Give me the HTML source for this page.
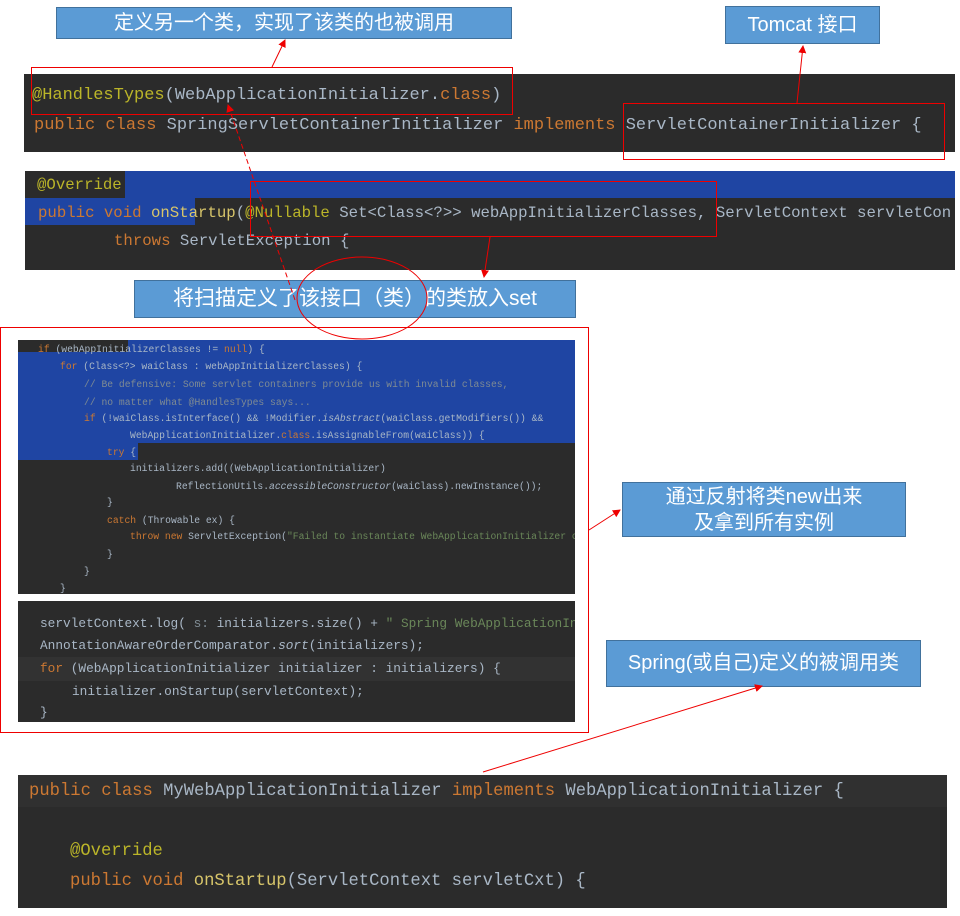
<!DOCTYPE html>
<html><head><meta charset="utf-8"><style>
body{margin:0;width:960px;height:916px;background:#fff;position:relative;overflow:hidden;font-family:"Liberation Sans","Noto Sans CJK SC",sans-serif}
.a{position:absolute}
.code{position:absolute;background:#2b2b2b;overflow:hidden;font-family:"Liberation Mono",monospace;color:#a9b7c6;white-space:pre}
.l{position:absolute;white-space:pre}
.k{color:#cc7832}.an{color:#bbb529}.c{color:#7f8b93}.s{color:#6a8759}.fn{color:#d7c56a}
.lab{position:absolute;background:#5b9bd5;border:1px solid #41719c;color:#fff;text-align:center;box-sizing:border-box}
.rr{position:absolute;border:1px solid #e00;box-sizing:border-box}
</style></head><body>

<div class="lab" style="left:56px;top:7px;width:456px;height:32px;font-size:20px;line-height:30px">定义另一个类，实现了该类的也被调用</div>
<div class="lab" style="left:725px;top:6px;width:155px;height:38px;font-size:20px;line-height:36px">Tomcat 接口</div>

<div class="code" style="left:24px;top:74px;width:931px;height:78px;font-size:17px">
<div class="l" style="left:8px;top:12px"><span class="an">@HandlesTypes</span>(WebApplicationInitializer.<span class="k">class</span>)</div>
<div class="l" style="left:10px;top:42px"><span class="k">public class </span>SpringServletContainerInitializer <span class="k">implements </span>ServletContainerInitializer {</div>
</div>

<div class="code" style="left:25px;top:171px;width:930px;height:99px;font-size:15.7px">
<div class="a" style="left:100px;top:0;width:830px;height:27px;background:#1f45a3"></div>
<div class="a" style="left:0;top:27px;width:170px;height:27px;background:#1f45a3"></div>
<div class="a" style="left:0;top:0;width:100px;height:27px;background:#2b2b2b"></div>
<div class="l" style="left:12px;top:5px"><span class="an">@Override</span></div>
<div class="l" style="left:13px;top:33px"><span class="k">public void </span><span class="fn">onStartup</span>(<span class="an">@Nullable</span> Set&lt;Class&lt;?&gt;&gt; webAppInitializerClasses, ServletContext servletCon</div>
<div class="l" style="left:89px;top:61px"><span class="k">throws </span>ServletException {</div>
</div>

<div class="rr" style="left:31px;top:67px;width:482px;height:48px"></div>
<div class="rr" style="left:623px;top:103px;width:322px;height:57px"></div>
<div class="rr" style="left:250px;top:181px;width:467px;height:56px"></div>

<div class="lab" style="left:134px;top:280px;width:442px;height:38px;font-size:21px;line-height:36px">将扫描定义了该接口（类）的类放入set</div>

<div class="rr" style="left:0;top:327px;width:589px;height:406px"></div>

<div class="code" style="left:18px;top:340px;width:557px;height:254px;font-size:9.7px">
<div class="a" style="left:0;top:0;width:557px;height:103px;background:#1f45a3"></div>
<div class="a" style="left:0;top:0;width:110px;height:12px;background:#2b2b2b"></div>
<div class="a" style="left:0;top:103px;width:120px;height:17px;background:#1f45a3"></div>
<div class="l" style="left:20px;top:4px"><span class="k">if </span>(webAppInitializerClasses != <span class="k">null</span>) {</div>
<div class="l" style="left:42px;top:21px"><span class="k">for </span>(Class&lt;?&gt; waiClass : webAppInitializerClasses) {</div>
<div class="l c" style="left:66px;top:39px">// Be defensive: Some servlet containers provide us with invalid classes,</div>
<div class="l c" style="left:66px;top:57px">// no matter what @HandlesTypes says...</div>
<div class="l" style="left:66px;top:73px"><span class="k">if </span>(!waiClass.isInterface() &amp;&amp; !Modifier.<i>isAbstract</i>(waiClass.getModifiers()) &amp;&amp;</div>
<div class="l" style="left:112px;top:90px">WebApplicationInitializer.<span class="k">class</span>.isAssignableFrom(waiClass)) {</div>
<div class="l" style="left:89px;top:107px"><span class="k">try </span>{</div>
<div class="l" style="left:112px;top:123px">initializers.add((WebApplicationInitializer)</div>
<div class="l" style="left:158px;top:141px">ReflectionUtils.<i>accessibleConstructor</i>(waiClass).newInstance());</div>
<div class="l" style="left:89px;top:157px">}</div>
<div class="l" style="left:89px;top:175px"><span class="k">catch </span>(Throwable ex) {</div>
<div class="l" style="left:112px;top:191px"><span class="k">throw new </span>ServletException(<span class="s">"Failed to instantiate WebApplicationInitializer c</span></div>
<div class="l" style="left:89px;top:209px">}</div>
<div class="l" style="left:66px;top:226px">}</div>
<div class="l" style="left:42px;top:243px">}</div>
</div>

<div class="code" style="left:18px;top:601px;width:557px;height:121px;font-size:12.8px">
<div class="l" style="left:22px;top:15px">servletContext.log( <span class="c">s:</span> initializers.size() + <span class="s">" Spring WebApplicationIn</span></div>
<div class="l" style="left:22px;top:37px">AnnotationAwareOrderComparator.<i>sort</i>(initializers);</div>
<div class="a" style="left:0;top:56px;width:557px;height:24px;background:#323232"></div>
<div class="l" style="left:22px;top:60px"><span class="k">for </span>(WebApplicationInitializer initializer : initializers) {</div>
<div class="l" style="left:54px;top:83px">initializer.onStartup(servletContext);</div>
<div class="l" style="left:22px;top:104px">}</div>
</div>

<div class="lab" style="left:622px;top:482px;width:284px;height:55px;font-size:20px;line-height:26px;padding-top:1px">通过反射将类new出来<br>及拿到所有实例</div>
<div class="lab" style="left:606px;top:640px;width:315px;height:47px;font-size:20px;line-height:45px">Spring(或自己)定义的被调用类</div>

<div class="code" style="left:18px;top:775px;width:929px;height:133px;font-size:17.2px">
<div class="a" style="left:0;top:0;width:929px;height:32px;background:#303030"></div>
<div class="l" style="left:11px;top:7px"><span class="k">public class </span>MyWebApplicationInitializer <span class="k">implements </span>WebApplicationInitializer {</div>
<div class="l" style="left:52px;top:67px"><span class="an">@Override</span></div>
<div class="l" style="left:52px;top:97px"><span class="k">public void </span><span class="fn">onStartup</span>(ServletContext servletCxt) {</div>
</div>

<svg class="a" style="left:0;top:0" width="960" height="916">
<defs><marker id="m" markerWidth="8" markerHeight="8" refX="7" refY="4" orient="auto"><path d="M0,0 L8,4 L0,8z" fill="#e00"/></marker></defs>
<g stroke="#e00" stroke-width="1" fill="none">
<line x1="272" y1="67" x2="285" y2="40" marker-end="url(#m)"/>
<line x1="797" y1="103" x2="803" y2="46" marker-end="url(#m)"/>
<line x1="490" y1="237" x2="484" y2="277" marker-end="url(#m)"/>
<line x1="295" y1="300" x2="228" y2="105" stroke-dasharray="5,3" marker-end="url(#m)"/>
<line x1="589" y1="530" x2="620" y2="510" marker-end="url(#m)"/>
<line x1="483" y1="772" x2="762" y2="686" marker-end="url(#m)"/>
<ellipse cx="362" cy="298" rx="65" ry="41"/>
</g></svg>
</body></html>
